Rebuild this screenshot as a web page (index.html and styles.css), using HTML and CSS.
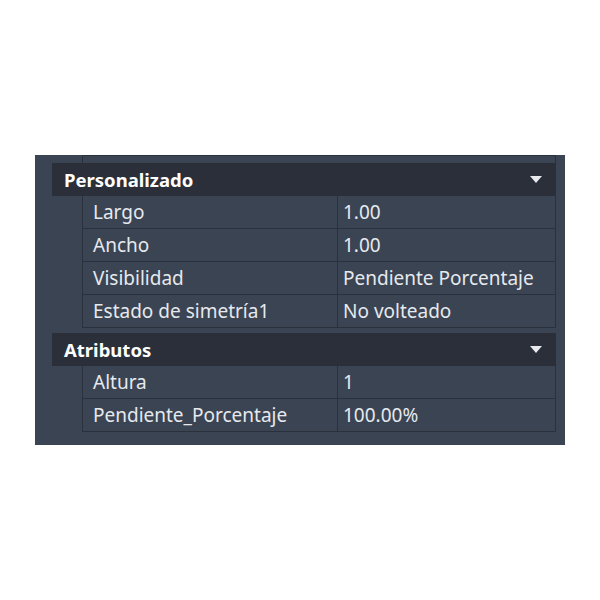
FILE: index.html
```html
<!DOCTYPE html>
<html lang="es">
  <head>
    <meta charset="UTF-8">
    <meta name="viewport" content="width=device-width, initial-scale=1.0">
    <title>Propiedades</title>
    <link rel="stylesheet" href="styles.css">
  </head>
<body>
  <div class="paleta">
    <div class="fila-previa"></div>

    <div class="seccion">
      <div class="cabecera">
        <span>Personalizado</span>
        <span class="flecha"></span>
      </div>
      <div class="fila"><div class="nombre">Largo</div><div class="valor">1.00</div></div>
      <div class="fila"><div class="nombre">Ancho</div><div class="valor">1.00</div></div>
      <div class="fila"><div class="nombre">Visibilidad</div><div class="valor">Pendiente Porcentaje</div></div>
      <div class="fila"><div class="nombre">Estado de simetría1</div><div class="valor">No volteado</div></div>
    </div>

    <div class="seccion">
      <div class="cabecera">
        <span>Atributos</span>
        <span class="flecha"></span>
      </div>
      <div class="fila"><div class="nombre">Altura</div><div class="valor">1</div></div>
      <div class="fila"><div class="nombre">Pendiente_Porcentaje</div><div class="valor">100.00%</div></div>
    </div>
  </div>
</body>
</html>
```

FILE: styles.css
```css
:root {
  --color-fondo: #3b4453;
  --color-cabecera: #2a2f39;
  --color-linea: #2b313c;
  --color-texto: #e6e9ee;
}

body {
  margin: 0;
  background: white;
  font-family: 'Noto Sans', 'Open Sans', sans-serif;
}

.paleta {
  margin: 155px 0 0 35px;
  width: 530px;
  height: 290px;
  box-sizing: border-box;
  padding: 0 9px 0 17px;
  background-color: var(--color-fondo);
  color: var(--color-texto);
  font-size: 19px;
}

.fila-previa {
  height: 8px;
  margin-left: 30px;
  border-top: 1px solid var(--color-linea);
  border-left: 1px solid var(--color-linea);
  border-right: 1px solid var(--color-linea);
  box-sizing: border-box;
}

.seccion + .seccion {
  margin-top: 5px;
}

.cabecera {
  height: 33px;
  background-color: var(--color-cabecera);
  display: flex;
  align-items: center;
  justify-content: space-between;
  padding: 0 14px 0 12px;
  font-weight: bold;
  font-size: 18.5px;
  color: white;
}

.flecha {
  width: 0;
  height: 0;
  border-left: 6px solid transparent;
  border-right: 6px solid transparent;
  border-top: 7px solid #e8eaee;
}

.fila {
  display: grid;
  grid-template-columns: 255px 1fr;
  height: 33px;
  margin-left: 30px;
  box-sizing: border-box;
  border-left: 1px solid var(--color-linea);
  border-right: 1px solid var(--color-linea);
  border-bottom: 1px solid var(--color-linea);
}

.nombre, .valor {
  display: flex;
  align-items: center;
  white-space: nowrap;
}

.nombre {
  padding-left: 10px;
  border-right: 1px solid var(--color-linea);
}

.valor {
  padding-left: 5px;
}
```
